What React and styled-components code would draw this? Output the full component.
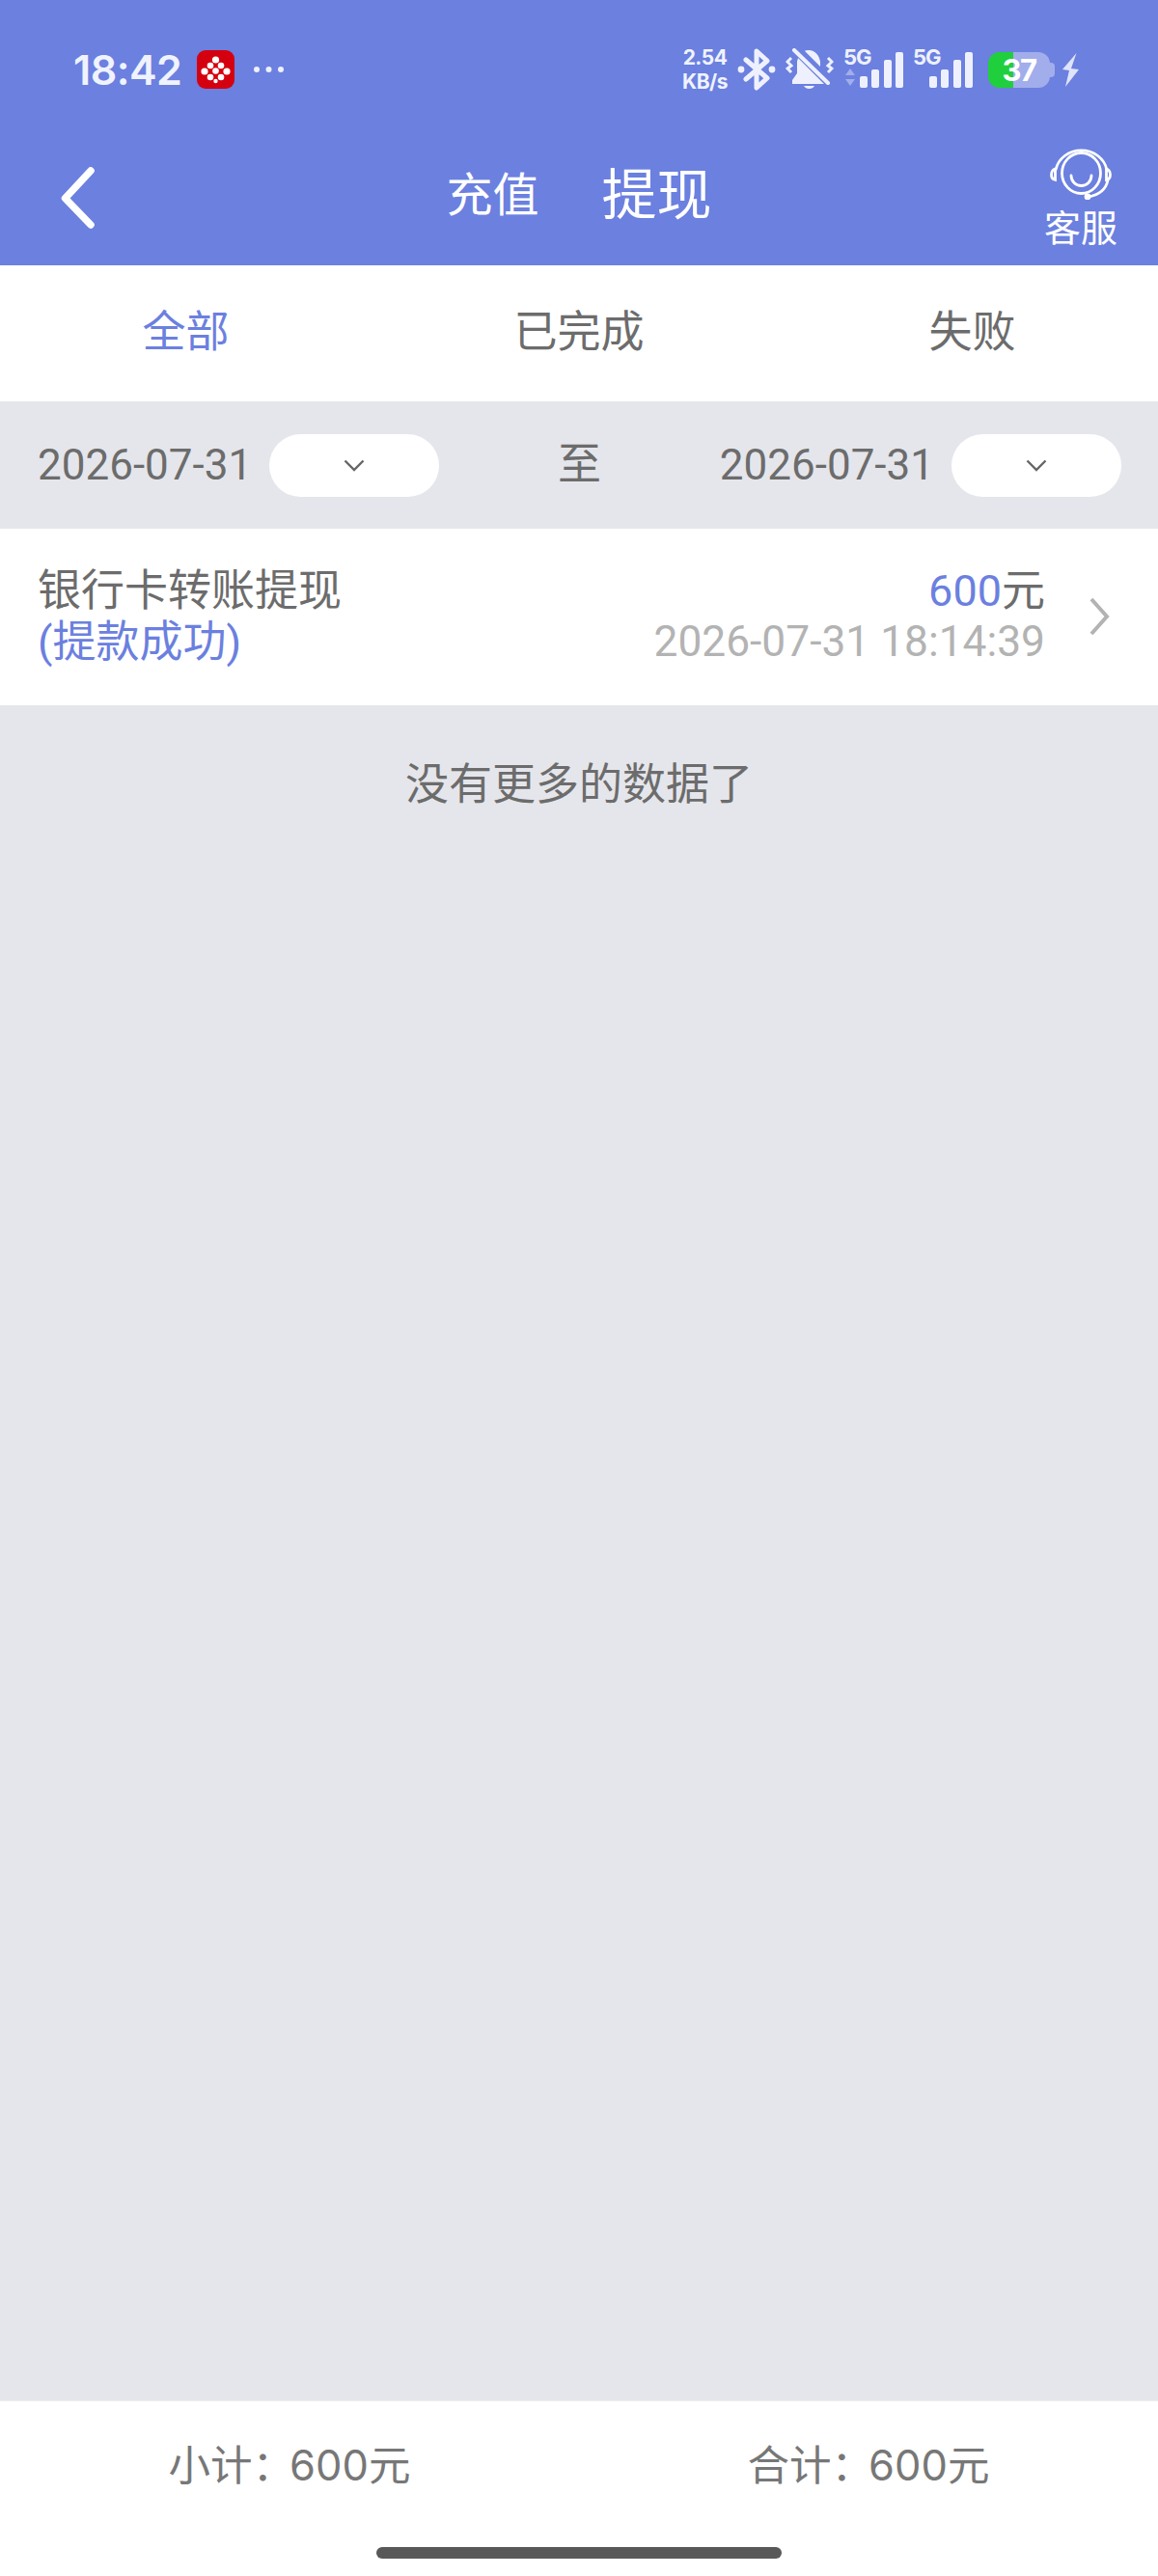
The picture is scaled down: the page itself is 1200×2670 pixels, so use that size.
import React from "react";
import styled, { createGlobalStyle } from "styled-components";

const Global = createGlobalStyle`
  html, body { margin: 0; padding: 0; background: #e5e6eb; }
  * { box-sizing: border-box; }
  body { font-family: Roboto, "Noto Sans CJK SC", sans-serif; color: #6c6c6c; }
`;

const Page = styled.div`
  width: 1200px;
  height: 2670px;
  display: flex;
  flex-direction: column;
  background: #e5e6eb;
  font-size: 45px;
  overflow: hidden;
`;

const Header = styled.header`
  background: #6b80df;
  height: 275px;
  flex: none;
`;

const StatusBar = styled.div`
  height: 130px;
  padding: 50px 80px 0 76px;
  display: flex;
  justify-content: space-between;
  align-items: flex-start;
  color: #f0f3fe;
`;

const StatusLeft = styled.div`
  display: flex;
  align-items: center;
  height: 44px;
`;

const Time = styled.span`
  font-family: Inter, sans-serif;
  font-weight: 600;
  font-size: 43px;
  line-height: 44px;
  letter-spacing: -0.5px;
`;

const AppBadge = styled.svg`
  width: 39px;
  height: 40px;
  margin-left: 16px;
  flex: none;
`;

const MoreDots = styled.svg`
  width: 33px;
  height: 8px;
  margin-left: 19px;
`;

const StatusRight = styled.div`
  display: flex;
  align-items: flex-start;
  gap: 10px;
  height: 46px;
`;

const Speed = styled.div`
  display: flex;
  flex-direction: column;
  align-items: center;
  font-family: Inter, sans-serif;
  font-weight: 700;
  font-size: 21px;
  line-height: 25px;
  width: 47px;
  margin-top: -3px;
  white-space: nowrap;
  letter-spacing: -0.5px;
`;

const StatusGlyph = styled.svg`
  flex: none;
  display: block;
`;

const SignalBox = styled.div`
  position: relative;
  width: 62px;
  height: 42px;
  flex: none;
`;

const SignalLabel = styled.span`
  position: absolute;
  left: 0;
  top: -3px;
  font-family: Inter, sans-serif;
  font-weight: 700;
  font-size: 22px;
  line-height: 24px;
  letter-spacing: -1px;
  color: #eef1fd;
`;

const Battery = styled.div`
  position: relative;
  width: 64px;
  height: 37px;
  margin-top: 4px;
  margin-left: 6px;
  margin-right: 5px;
  border-radius: 12px;
  background: linear-gradient(90deg, #20cf3c 0 40%, #a2adeb 40% 100%);
  display: flex;
  align-items: center;
  justify-content: center;
  color: #fff;
  font-family: Inter, sans-serif;
  font-weight: 700;
  font-size: 31px;
  letter-spacing: -1.5px;
  line-height: 37px;
  &::after {
    content: "";
    position: absolute;
    right: -5px;
    top: 11px;
    width: 5px;
    height: 15px;
    border-radius: 0 4px 4px 0;
    background: #a2adeb;
  }
`;

const Bolt = styled.svg`
  width: 20px;
  height: 36px;
  margin-top: 5px;
  margin-left: -3px;
`;

const Nav = styled.nav`
  height: 145px;
  display: grid;
  grid-template-columns: 1fr auto 1fr;
  align-items: center;
  color: #fff;
`;

const BackIcon = styled.svg`
  width: 36px;
  height: 66px;
  margin-left: 63px;
  margin-top: 5px;
  display: block;
`;

const NavTabs = styled.div`
  display: flex;
  align-items: center;
  gap: 65px;
`;

const NavTab = styled.span`
  font-size: ${(p) => (p.$active ? "57px" : "48px")};
  line-height: 70px;
`;

const Service = styled.div`
  justify-self: end;
  margin-right: 42px;
  margin-top: 2px;
  display: flex;
  flex-direction: column;
  align-items: center;
  gap: 10px;
  font-size: 38px;
  line-height: 40px;
`;

const ServiceIcon = styled.svg`
  width: 64px;
  height: 57px;
  display: block;
`;

const Tabs = styled.div`
  height: 141px;
  flex: none;
  background: #fff;
  padding-bottom: 10px;
  display: flex;
  align-items: center;
  justify-content: space-around;
`;

const Tab = styled.span`
  color: ${(p) => (p.$active ? "#6b80df" : "#6c6c6c")};
`;

const Filter = styled.div`
  height: 132px;
  flex: none;
  padding: 0 38px 0 39px;
  display: flex;
  align-items: center;
  justify-content: space-between;
`;

const DateGroup = styled.div`
  display: flex;
  align-items: center;
  gap: 18px;
`;

const DateText = styled.span`
  font-size: 44px;
`;

const Pill = styled.div`
  width: 176px;
  height: 65px;
  border-radius: 33px;
  background: #fff;
  display: flex;
  align-items: center;
  justify-content: center;
`;

const PillChevron = styled.svg`
  width: 22px;
  height: 13px;
`;

const To = styled.span`
  margin-top: -10px;
`;

const Row = styled.div`
  height: 183px;
  flex: none;
  background: #fff;
  padding: 0 50px 2px 39px;
  display: flex;
  align-items: center;
  line-height: 53px;
`;

const RowLeft = styled.div`
  flex: 1;
  display: flex;
  flex-direction: column;
`;

const RowRight = styled.div`
  display: flex;
  flex-direction: column;
  align-items: flex-end;
`;

const Accent = styled.span`
  color: #6b80df;
`;

const Stamp = styled.span`
  color: #b3b3b3;
  font-size: 44.3px;
`;

const RowChevron = styled.svg`
  width: 22px;
  height: 40px;
  margin-left: 45px;
`;

const Empty = styled.div`
  flex: 1;
  padding-top: 53px;
  text-align: center;
  line-height: 60px;
`;

const Footer = styled.footer`
  height: 182px;
  flex: none;
  background: #fff;
  border-top: 1px solid #eeeff2;
  display: flex;
  flex-direction: column;
  align-items: center;
`;

const Totals = styled.div`
  width: 100%;
  height: 151px;
  padding-bottom: 24px;
  display: grid;
  grid-template-columns: 1fr 1fr;
  align-items: center;
  justify-items: center;
  font-family: Inter, "Noto Sans CJK SC", sans-serif;
  font-size: 43.5px;
  color: #777;
`;

const Colon = styled.span`
  margin-right: -5px;
`;

const HomeBar = styled.div`
  width: 420px;
  height: 12px;
  border-radius: 6px;
  background: #585858;
`;

const badgeDots = [
  [19.5, 9, 3.6], [14, 15, 3.3], [25, 15, 3.3], [19.5, 20.5, 3.3],
  [8, 21, 3.6], [31, 21, 3.6], [14, 27, 3.3], [25, 27, 3.3], [19.5, 31, 2.2],
];

const Signal = ({ arrows }) => (
  <SignalBox>
    <SignalLabel>5G</SignalLabel>
    <StatusGlyph width="62" height="42" viewBox="0 0 62 42">
      {arrows && (
        <g fill="#a2adeb">
          <path d="M7 21l5 7H2z" />
          <path d="M7 39l5-7H2z" />
        </g>
      )}
      <g fill="#eef1fd">
        <rect x="17" y="29" width="8" height="12" rx="2" />
        <rect x="29" y="22" width="8" height="19" rx="2" />
        <rect x="42" y="12" width="8" height="29" rx="2" />
        <rect x="54" y="4" width="8" height="37" rx="2" />
      </g>
    </StatusGlyph>
  </SignalBox>
);

export default function App() {
  return (
    <Page>
      <Global />
      <Header>
        <StatusBar>
          <StatusLeft>
            <Time>18:42</Time>
            <AppBadge viewBox="0 0 39 40">
              <rect width="39" height="40" rx="9" fill="#d5000f" />
              {badgeDots.map(([x, y, r], i) => (
                <circle key={i} cx={x} cy={y + 1} r={r} fill="#fff" />
              ))}
            </AppBadge>
            <MoreDots viewBox="0 0 33 8">
              <circle cx="4" cy="4" r="3" fill="#eef1fd" />
              <circle cx="16.5" cy="4" r="3" fill="#eef1fd" />
              <circle cx="29" cy="4" r="3" fill="#eef1fd" />
            </MoreDots>
          </StatusLeft>
          <StatusRight>
            <Speed>
              <span>2.54</span>
              <span>KB/s</span>
            </Speed>
            <StatusGlyph width="40" height="44" viewBox="0 0 40 44">
              <path d="M9 12l22 19-11 10V3l11 10L9 32" fill="none" stroke="#eef1fd" strokeWidth="5" strokeLinejoin="round" strokeLinecap="round" />
              <circle cx="4" cy="22" r="3.4" fill="#eef1fd" />
              <circle cx="36" cy="22" r="3.4" fill="#eef1fd" />
            </StatusGlyph>
            <StatusGlyph width="50" height="44" viewBox="0 0 50 44">
              <path d="M24 2c7 0 11 6 12 12v12l4 7v4H7v-4l5-7V14c1-6 5-12 12-12z" fill="#eef1fd" />
              <path d="M19 39h11c-1 2-3 3-5.500 3s-4.500-1-5.500-3z" fill="#eef1fd" />
              <path d="M6 -4l42 42" stroke="#6b80df" strokeWidth="10" />
              <path d="M9 2l35 34" stroke="#eef1fd" strokeWidth="4" strokeLinecap="round" />
              <path d="M6 10l-4 4 4 4-4 3 4 4" fill="none" stroke="#eef1fd" strokeWidth="3" />
              <path d="M44 10l4 4-4 4 4 3-4 4" fill="none" stroke="#eef1fd" strokeWidth="3" />
            </StatusGlyph>
            <Signal arrows />
            <Signal />
            <Battery>37</Battery>
            <Bolt viewBox="0 0 20 36">
              <path d="M15.500 0L1 17l7 1-4 17 14-18-8-1z" fill="#dfe4fb" />
            </Bolt>
          </StatusRight>
        </StatusBar>
        <Nav>
          <BackIcon viewBox="0 0 36 66">
            <path d="M31 5L4.500 33.500 31 61" fill="none" stroke="#fff" strokeWidth="7.500" strokeLinecap="round" strokeLinejoin="round" />
          </BackIcon>
          <NavTabs>
            <NavTab>充值</NavTab>
            <NavTab $active>提现</NavTab>
          </NavTabs>
          <Service>
            <ServiceIcon viewBox="0 0 64 57" fill="none" stroke="#fff" strokeWidth="2.800" strokeLinecap="round">
              <ellipse cx="32.500" cy="29.500" rx="20" ry="21" />
              <path d="M6 26A27 25 0 0 1 59 26" />
              <path d="M5.500 25c-3 1-4 3-4 6s1.500 5 4 5.500z" />
              <path d="M58.500 25c3 1 4 3 4 6s-1.500 5-4 5.500z" />
              <path d="M60 37c-2 9-9 15-20 17" />
              <circle cx="39" cy="54" r="2" fill="#fff" />
              <path d="M22 32a10.500 10.500 0 0 0 21 0" />
            </ServiceIcon>
            <span>客服</span>
          </Service>
        </Nav>
      </Header>

      <Tabs>
        <Tab $active>全部</Tab>
        <Tab>已完成</Tab>
        <Tab>失败</Tab>
      </Tabs>

      <Filter>
        <DateGroup>
          <DateText>2026-07-31</DateText>
          <Pill>
            <PillChevron viewBox="0 0 22 13">
              <path d="M1.500 1.500L11 11l9.500-9.500" fill="none" stroke="#666" strokeWidth="2.400" />
            </PillChevron>
          </Pill>
        </DateGroup>
        <To>至</To>
        <DateGroup>
          <DateText>2026-07-31</DateText>
          <Pill>
            <PillChevron viewBox="0 0 22 13">
              <path d="M1.500 1.500L11 11l9.500-9.500" fill="none" stroke="#666" strokeWidth="2.400" />
            </PillChevron>
          </Pill>
        </DateGroup>
      </Filter>

      <Row>
        <RowLeft>
          <span>银行卡转账提现</span>
          <Accent>(提款成功)</Accent>
        </RowLeft>
        <RowRight>
          <span>
            <Accent>600</Accent>元
          </span>
          <Stamp>2026-07-31 18:14:39</Stamp>
        </RowRight>
        <RowChevron viewBox="0 0 22 40">
          <path d="M3 2l16 18L3 38" fill="none" stroke="#b3b3b3" strokeWidth="4" />
        </RowChevron>
      </Row>

      <Empty>没有更多的数据了</Empty>

      <Footer>
        <Totals>
          <span>小计<Colon>：</Colon>600元</span>
          <span>合计<Colon>：</Colon>600元</span>
        </Totals>
        <HomeBar />
      </Footer>
    </Page>
  );
}
